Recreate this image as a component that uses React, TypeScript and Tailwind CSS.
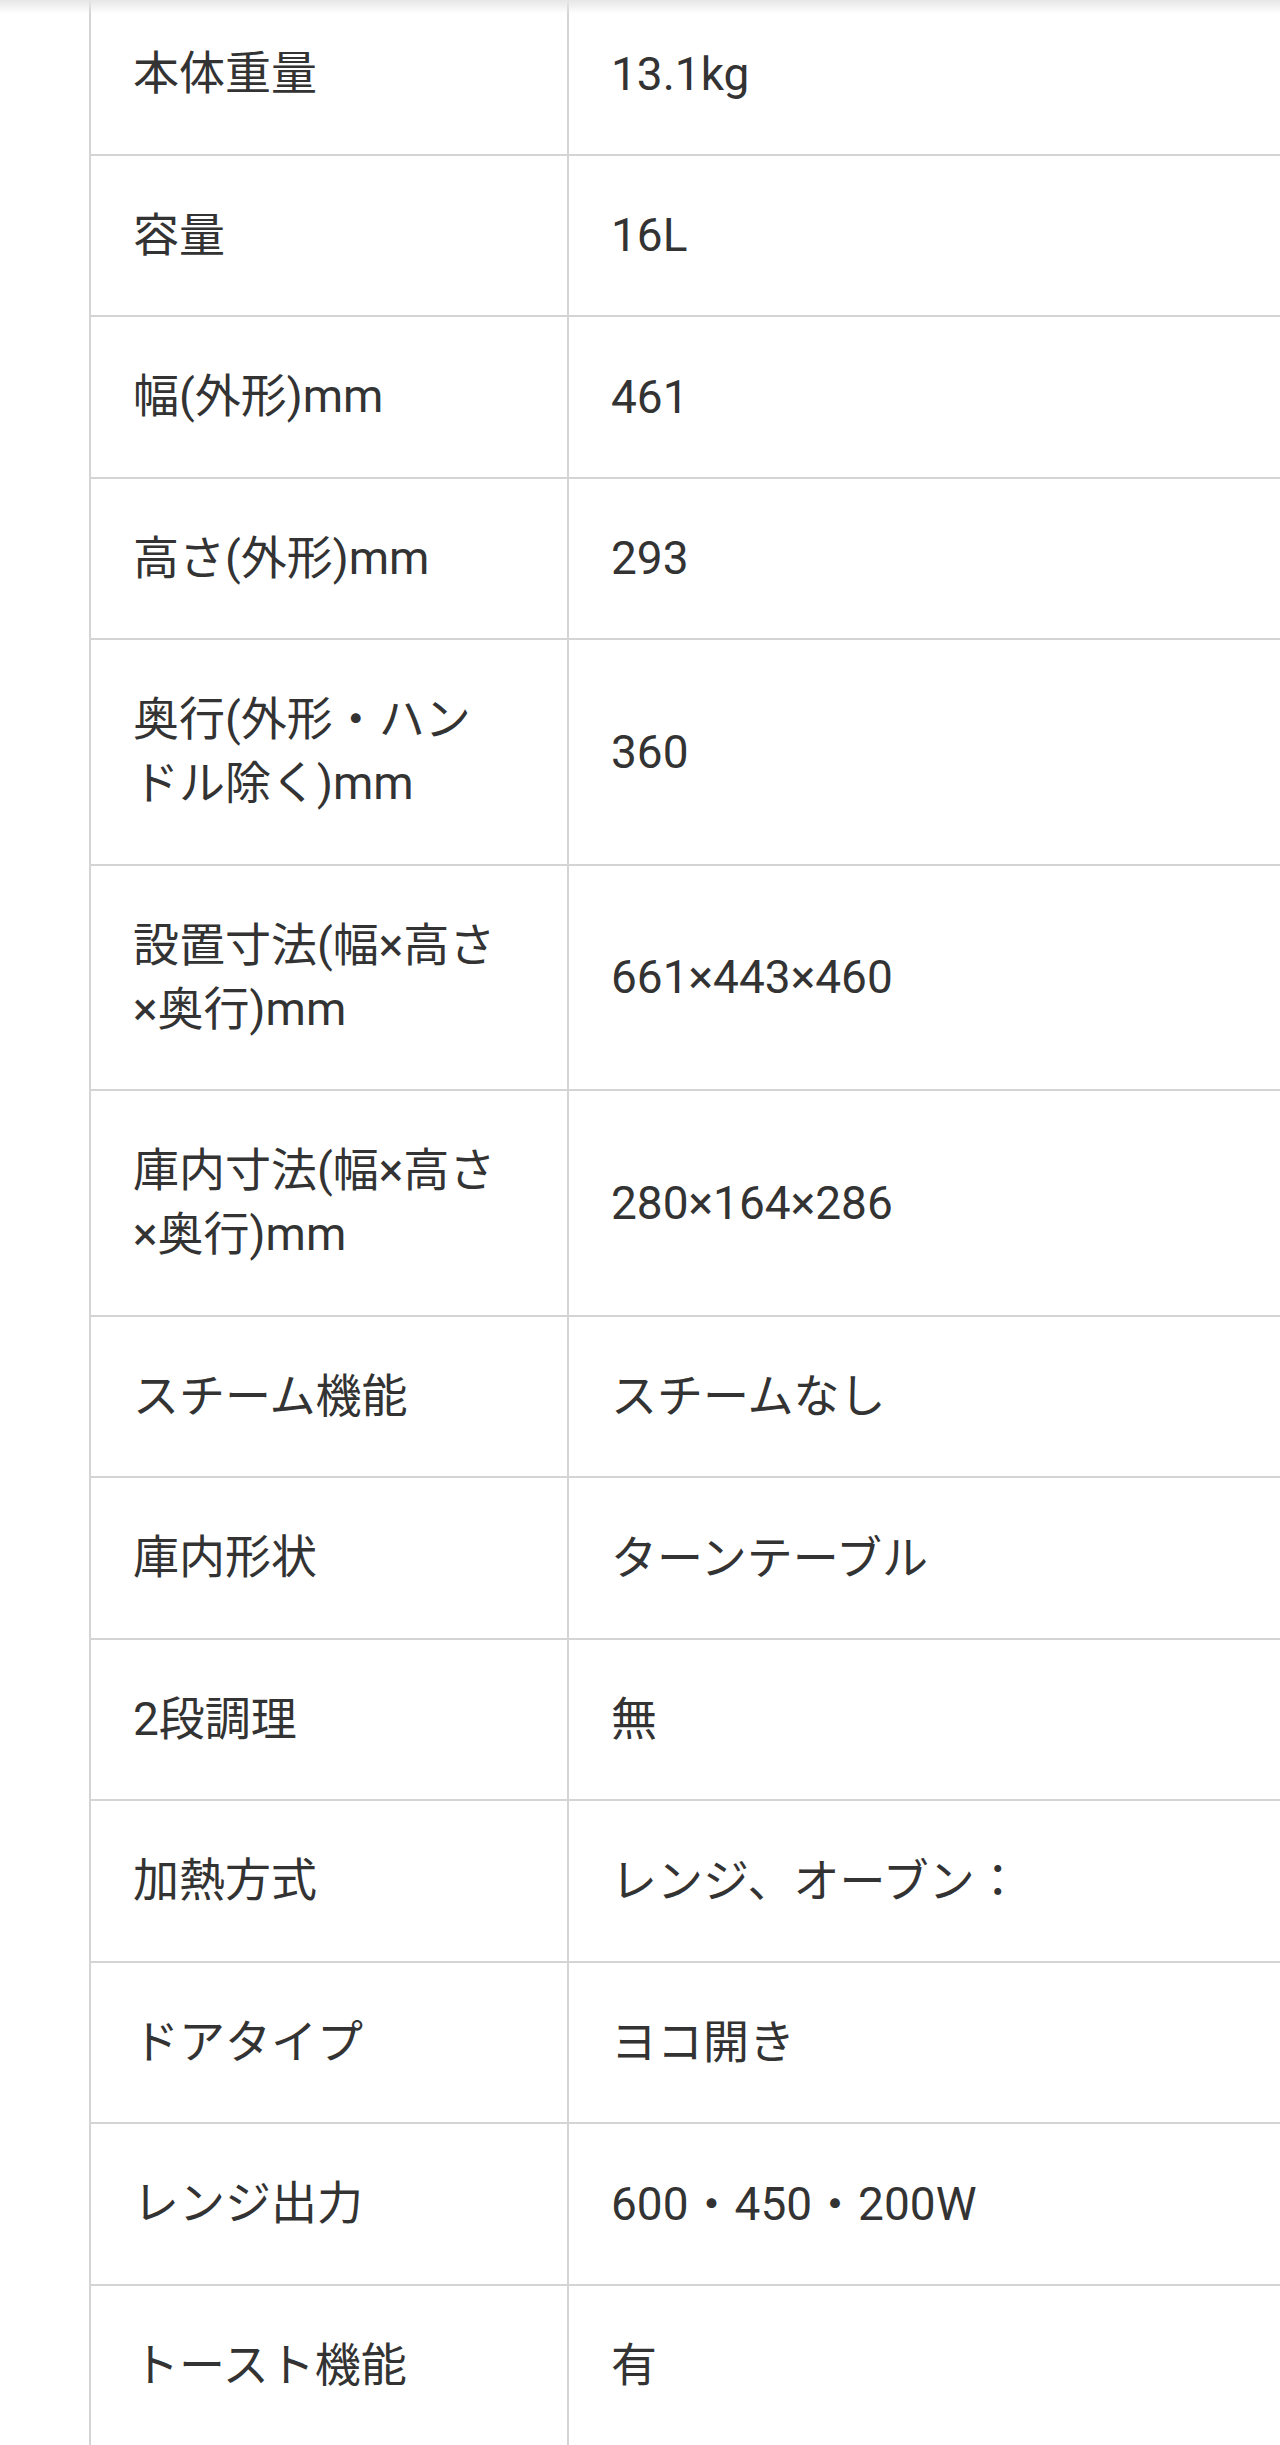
import React from 'react';

const specs: { label: string; value: string }[] = [
  { label: '本体重量', value: '13.1kg' },
  { label: '容量', value: '16L' },
  { label: '幅(外形)mm', value: '461' },
  { label: '高さ(外形)mm', value: '293' },
  { label: '奥行(外形・ハンドル除く)mm', value: '360' },
  { label: '設置寸法(幅×高さ×奥行)mm', value: '661×443×460' },
  { label: '庫内寸法(幅×高さ×奥行)mm', value: '280×164×286' },
  { label: 'スチーム機能', value: 'スチームなし' },
  { label: '庫内形状', value: 'ターンテーブル' },
  { label: '2段調理', value: '無' },
  { label: '加熱方式', value: 'レンジ、オーブン：' },
  { label: 'ドアタイプ', value: 'ヨコ開き' },
  { label: 'レンジ出力', value: '600・450・200W' },
  { label: 'トースト機能', value: '有' },
];

export default function App() {
  return (
    <div
      className="relative h-[2445px] overflow-hidden bg-white text-[46px] leading-[64px] text-[#333333]"
      style={{ fontFamily: 'Roboto, "Noto Sans CJK JP", sans-serif' }}
    >
      <div className="-mt-[6px] pl-[89px]">
        <div className="w-[1400px]">
          {specs.map((row, i) => (
            <div key={i} className="flex border-b-2 border-[#d4d4d4]">
              <div className="w-[480px] shrink-0 border-x-2 border-[#d4d4d4] pt-[47px] pb-[48.5px] pl-[42px] pr-[58px]">
                {row.label}
              </div>
              <div className="flex flex-1 items-center pl-[42px] pr-[40px]">{row.value}</div>
            </div>
          ))}
        </div>
      </div>
      <div className="pointer-events-none absolute inset-x-0 top-0 h-[14px] bg-gradient-to-b from-[#e6e6e6] to-white/0" />
    </div>
  );
}
